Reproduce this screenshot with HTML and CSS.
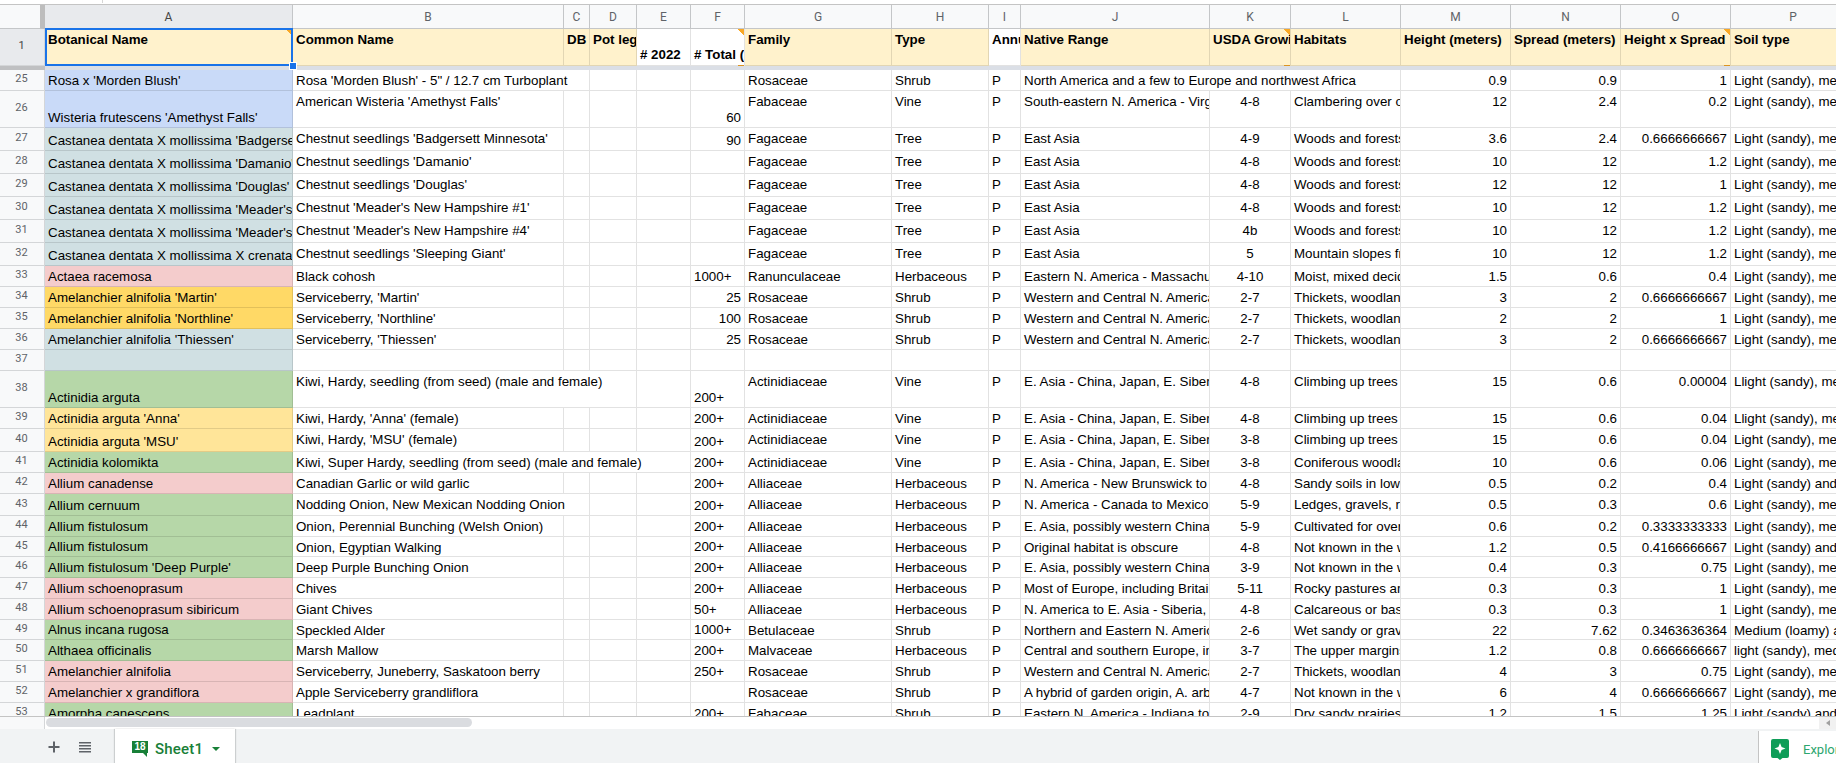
FILE: index.html
```html
<!DOCTYPE html>
<html lang="en">
<head>
<meta charset="utf-8">
<title>Sheet1</title>
<link rel="stylesheet" href="styles.css">
</head>
<body>
<div class="topstrip"><span class="tick"></span></div>
<div class="grid">
<table class="sheet">
<colgroup>
<col class="w-rh"><col class="w-a"><col class="w-b"><col class="w-c"><col class="w-d"><col class="w-e"><col class="w-f"><col class="w-g"><col class="w-h"><col class="w-i"><col class="w-j"><col class="w-k"><col class="w-l"><col class="w-m"><col class="w-m"><col class="w-m"><col class="w-p">
</colgroup>
<thead>
<tr class="letters"><th class="corner"></th><th class="sel">A</th><th>B</th><th>C</th><th>D</th><th>E</th><th>F</th><th>G</th><th>H</th><th>I</th><th>J</th><th>K</th><th>L</th><th>M</th><th>N</th><th>O</th><th>P</th></tr>
</thead>
<tbody>
<tr class="h37 head"><th class="sel">1</th><td class="note">Botanical Name</td><td>Common Name</td><td>DB</td><td>Pot legs</td><td class="plain b"># 2022</td><td class="plain b note"># Total (all)</td><td>Family</td><td>Type</td><td class="plain">Annual</td><td>Native Range</td><td class="note">USDA Growing Zone</td><td>Habitats</td><td>Height (meters)</td><td>Spread (meters)</td><td class="note">Height x Spread</td><td>Soil type</td></tr>
<tr class="freeze"><th></th><td colspan="16"></td></tr>
<tr class="h21"><th>25</th><td class="bl">Rosa x 'Morden Blush'</td><td colspan="2">Rosa 'Morden Blush' - 5" / 12.7 cm Turboplant</td><td></td><td></td><td class="b"></td><td>Rosaceae</td><td>Shrub</td><td>P</td><td colspan="3">North America and a few to Europe and northwest Africa</td><td class="n">0.9</td><td class="n">0.9</td><td class="n">1</td><td>Light (sandy), medium (loamy)</td></tr>
<tr class="h37"><th>26</th><td class="bl">Wisteria frutescens 'Amethyst Falls'</td><td>American Wisteria 'Amethyst Falls'</td><td></td><td></td><td></td><td class="b n">60</td><td>Fabaceae</td><td>Vine</td><td>P</td><td>South-eastern N. America - Virginia to Florida</td><td class="c">4-8</td><td>Clambering over other plants</td><td class="n">12</td><td class="n">2.4</td><td class="n">0.2</td><td>Light (sandy), medium (loamy)</td></tr>
<tr class="h23"><th>27</th><td class="te">Castanea dentata X mollissima 'Badgersett Minnesota'</td><td>Chestnut seedlings 'Badgersett Minnesota'</td><td></td><td></td><td></td><td class="b n">90</td><td>Fagaceae</td><td>Tree</td><td>P</td><td>East Asia</td><td class="c">4-9</td><td>Woods and forests</td><td class="n">3.6</td><td class="n">2.4</td><td class="n">0.6666666667</td><td>Light (sandy), medium (loamy)</td></tr>
<tr class="h23"><th>28</th><td class="te">Castanea dentata X mollissima 'Damanio'</td><td>Chestnut seedlings 'Damanio'</td><td></td><td></td><td></td><td></td><td>Fagaceae</td><td>Tree</td><td>P</td><td>East Asia</td><td class="c">4-8</td><td>Woods and forests</td><td class="n">10</td><td class="n">12</td><td class="n">1.2</td><td>Light (sandy), medium (loamy)</td></tr>
<tr class="h23"><th>29</th><td class="te">Castanea dentata X mollissima 'Douglas'</td><td>Chestnut seedlings 'Douglas'</td><td></td><td></td><td></td><td></td><td>Fagaceae</td><td>Tree</td><td>P</td><td>East Asia</td><td class="c">4-8</td><td>Woods and forests</td><td class="n">12</td><td class="n">12</td><td class="n">1</td><td>Light (sandy), medium (loamy)</td></tr>
<tr class="h23"><th>30</th><td class="te">Castanea dentata X mollissima 'Meader's New Hampshire #1'</td><td>Chestnut 'Meader's New Hampshire #1'</td><td></td><td></td><td></td><td></td><td>Fagaceae</td><td>Tree</td><td>P</td><td>East Asia</td><td class="c">4-8</td><td>Woods and forests</td><td class="n">10</td><td class="n">12</td><td class="n">1.2</td><td>Light (sandy), medium (loamy)</td></tr>
<tr class="h23"><th>31</th><td class="te">Castanea dentata X mollissima 'Meader's New Hampshire #4'</td><td>Chestnut 'Meader's New Hampshire #4'</td><td></td><td></td><td></td><td></td><td>Fagaceae</td><td>Tree</td><td>P</td><td>East Asia</td><td class="c">4b</td><td>Woods and forests</td><td class="n">10</td><td class="n">12</td><td class="n">1.2</td><td>Light (sandy), medium (loamy)</td></tr>
<tr class="h23"><th>32</th><td class="te">Castanea dentata X mollissima X crenata 'Sleeping Giant'</td><td>Chestnut seedlings 'Sleeping Giant'</td><td></td><td></td><td></td><td></td><td>Fagaceae</td><td>Tree</td><td>P</td><td>East Asia</td><td class="c">5</td><td>Mountain slopes from low elevations</td><td class="n">10</td><td class="n">12</td><td class="n">1.2</td><td>Light (sandy), medium (loamy)</td></tr>
<tr class="h21"><th>33</th><td class="rd">Actaea racemosa</td><td>Black cohosh</td><td></td><td></td><td></td><td class="b">1000+</td><td>Ranunculaceae</td><td>Herbaceous</td><td>P</td><td>Eastern N. America - Massachusetts to Georgia</td><td class="c">4-10</td><td>Moist, mixed deciduous woods</td><td class="n">1.5</td><td class="n">0.6</td><td class="n">0.4</td><td>Light (sandy), medium (loamy)</td></tr>
<tr class="h21"><th>34</th><td class="or">Amelanchier alnifolia 'Martin'</td><td>Serviceberry, 'Martin'</td><td></td><td></td><td></td><td class="b n">25</td><td>Rosaceae</td><td>Shrub</td><td>P</td><td>Western and Central N. America</td><td class="c">2-7</td><td>Thickets, woodland edges</td><td class="n">3</td><td class="n">2</td><td class="n">0.6666666667</td><td>Light (sandy), medium (loamy)</td></tr>
<tr class="h21"><th>35</th><td class="or">Amelanchier alnifolia 'Northline'</td><td>Serviceberry, 'Northline'</td><td></td><td></td><td></td><td class="b n">100</td><td>Rosaceae</td><td>Shrub</td><td>P</td><td>Western and Central N. America</td><td class="c">2-7</td><td>Thickets, woodland edges</td><td class="n">2</td><td class="n">2</td><td class="n">1</td><td>Light (sandy), medium (loamy)</td></tr>
<tr class="h21"><th>36</th><td class="te">Amelanchier alnifolia 'Thiessen'</td><td>Serviceberry, 'Thiessen'</td><td></td><td></td><td></td><td class="b n">25</td><td>Rosaceae</td><td>Shrub</td><td>P</td><td>Western and Central N. America</td><td class="c">2-7</td><td>Thickets, woodland edges</td><td class="n">3</td><td class="n">2</td><td class="n">0.6666666667</td><td>Light (sandy), medium (loamy)</td></tr>
<tr class="h21"><th>37</th><td class="te"></td><td></td><td></td><td></td><td></td><td></td><td></td><td></td><td></td><td></td><td></td><td></td><td></td><td></td><td></td><td></td></tr>
<tr class="h37"><th>38</th><td class="gr">Actinidia arguta</td><td colspan="3">Kiwi, Hardy, seedling (from seed) (male and female)</td><td></td><td class="b">200+</td><td>Actinidiaceae</td><td>Vine</td><td>P</td><td>E. Asia - China, Japan, E. Siberia</td><td class="c">4-8</td><td>Climbing up trees</td><td class="n">15</td><td class="n">0.6</td><td class="n">0.00004</td><td>Llight (sandy), medium (loamy)</td></tr>
<tr class="h21"><th>39</th><td class="ye">Actinidia arguta 'Anna'</td><td>Kiwi, Hardy, 'Anna' (female)</td><td></td><td></td><td></td><td class="b">200+</td><td>Actinidiaceae</td><td>Vine</td><td>P</td><td>E. Asia - China, Japan, E. Siberia</td><td class="c">4-8</td><td>Climbing up trees</td><td class="n">15</td><td class="n">0.6</td><td class="n">0.04</td><td>Llight (sandy), medium (loamy)</td></tr>
<tr class="h23"><th>40</th><td class="ye">Actinidia arguta 'MSU'</td><td>Kiwi, Hardy, 'MSU' (female)</td><td></td><td></td><td></td><td class="b">200+</td><td>Actinidiaceae</td><td>Vine</td><td>P</td><td>E. Asia - China, Japan, E. Siberia</td><td class="c">3-8</td><td>Climbing up trees</td><td class="n">15</td><td class="n">0.6</td><td class="n">0.04</td><td>Light (sandy), medium (loamy)</td></tr>
<tr class="h21"><th>41</th><td class="gr">Actinidia kolomikta</td><td colspan="4">Kiwi, Super Hardy, seedling (from seed) (male and female)</td><td class="b">200+</td><td>Actinidiaceae</td><td>Vine</td><td>P</td><td>E. Asia - China, Japan, E. Siberia</td><td class="c">3-8</td><td>Coniferous woodland</td><td class="n">10</td><td class="n">0.6</td><td class="n">0.06</td><td>Light (sandy), medium (loamy)</td></tr>
<tr class="h21"><th>42</th><td class="rd">Allium canadense</td><td>Canadian Garlic or wild garlic</td><td></td><td></td><td></td><td class="b">200+</td><td>Alliaceae</td><td>Herbaceous</td><td>P</td><td>N. America - New Brunswick to Florida</td><td class="c">4-8</td><td>Sandy soils in low woods</td><td class="n">0.5</td><td class="n">0.2</td><td class="n">0.4</td><td>Light (sandy) and medium (loamy)</td></tr>
<tr class="h22"><th>43</th><td class="gr">Allium cernuum</td><td colspan="2">Nodding Onion, New Mexican Nodding Onion</td><td></td><td></td><td class="b">200+</td><td>Alliaceae</td><td>Herbaceous</td><td>P</td><td>N. America - Canada to Mexico</td><td class="c">5-9</td><td>Ledges, gravels, rocky</td><td class="n">0.5</td><td class="n">0.3</td><td class="n">0.6</td><td>Light (sandy), medium (loamy)</td></tr>
<tr class="h21"><th>44</th><td class="gr">Allium fistulosum</td><td>Onion, Perennial Bunching (Welsh Onion)</td><td></td><td></td><td></td><td class="b">200+</td><td>Alliaceae</td><td>Herbaceous</td><td>P</td><td>E. Asia, possibly western China</td><td class="c">5-9</td><td>Cultivated for over 2000 years</td><td class="n">0.6</td><td class="n">0.2</td><td class="n">0.3333333333</td><td>Light (sandy), medium (loamy)</td></tr>
<tr class="h20"><th>45</th><td class="gr">Allium fistulosum</td><td>Onion, Egyptian Walking</td><td></td><td></td><td></td><td class="b">200+</td><td>Alliaceae</td><td>Herbaceous</td><td>P</td><td>Original habitat is obscure</td><td class="c">4-8</td><td>Not known in the wild</td><td class="n">1.2</td><td class="n">0.5</td><td class="n">0.4166666667</td><td>Light (sandy) and medium (loamy)</td></tr>
<tr class="h21"><th>46</th><td class="gr">Allium fistulosum 'Deep Purple'</td><td>Deep Purple Bunching Onion</td><td></td><td></td><td></td><td class="b">200+</td><td>Alliaceae</td><td>Herbaceous</td><td>P</td><td>E. Asia, possibly western China</td><td class="c">3-9</td><td>Not known in the wild</td><td class="n">0.4</td><td class="n">0.3</td><td class="n">0.75</td><td>Light (sandy), medium (loamy)</td></tr>
<tr class="h21"><th>47</th><td class="rd">Allium schoenoprasum</td><td>Chives</td><td></td><td></td><td></td><td class="b">200+</td><td>Alliaceae</td><td>Herbaceous</td><td>P</td><td>Most of Europe, including Britain</td><td class="c">5-11</td><td>Rocky pastures and meadows</td><td class="n">0.3</td><td class="n">0.3</td><td class="n">1</td><td>Light (sandy), medium (loamy)</td></tr>
<tr class="h21"><th>48</th><td class="rd">Allium schoenoprasum sibiricum</td><td>Giant Chives</td><td></td><td></td><td></td><td class="b">50+</td><td>Alliaceae</td><td>Herbaceous</td><td>P</td><td>N. America to E. Asia - Siberia, Japan</td><td class="c">4-8</td><td>Calcareous or basic rocks</td><td class="n">0.3</td><td class="n">0.3</td><td class="n">1</td><td>Light (sandy), medium (loamy)</td></tr>
<tr class="h20"><th>49</th><td class="gr">Alnus incana rugosa</td><td>Speckled Alder</td><td></td><td></td><td></td><td class="b">1000+</td><td>Betulaceae</td><td>Shrub</td><td>P</td><td>Northern and Eastern N. America</td><td class="c">2-6</td><td>Wet sandy or gravelly soils</td><td class="n">22</td><td class="n">7.62</td><td class="n">0.3463636364</td><td>Medium (loamy) and heavy</td></tr>
<tr class="h21"><th>50</th><td class="gr">Althaea officinalis</td><td>Marsh Mallow</td><td></td><td></td><td></td><td class="b">200+</td><td>Malvaceae</td><td>Herbaceous</td><td>P</td><td>Central and southern Europe, including Britain</td><td class="c">3-7</td><td>The upper margins of salt marshes</td><td class="n">1.2</td><td class="n">0.8</td><td class="n">0.6666666667</td><td>light (sandy), medium (loamy)</td></tr>
<tr class="h21"><th>51</th><td class="rd">Amelanchier alnifolia</td><td>Serviceberry, Juneberry, Saskatoon berry</td><td></td><td></td><td></td><td class="b">250+</td><td>Rosaceae</td><td>Shrub</td><td>P</td><td>Western and Central N. America</td><td class="c">2-7</td><td>Thickets, woodland edges</td><td class="n">4</td><td class="n">3</td><td class="n">0.75</td><td>Light (sandy), medium (loamy)</td></tr>
<tr class="h21"><th>52</th><td class="rd">Amelanchier x grandiflora</td><td>Apple Serviceberry grandliflora</td><td></td><td></td><td></td><td></td><td>Rosaceae</td><td>Shrub</td><td>P</td><td>A hybrid of garden origin, A. arborea</td><td class="c">4-7</td><td>Not known in the wild</td><td class="n">6</td><td class="n">4</td><td class="n">0.6666666667</td><td>Light (sandy), medium (loamy)</td></tr>
<tr class="h21"><th>53</th><td class="gr">Amorpha canescens</td><td>Leadplant</td><td></td><td></td><td></td><td class="b">200+</td><td>Fabaceae</td><td>Shrub</td><td>P</td><td>Eastern N. America - Indiana to Texas</td><td class="c">2-9</td><td>Dry sandy prairies</td><td class="n">1.2</td><td class="n">1.5</td><td class="n">1.25</td><td>Light (sandy) and medium (loamy)</td></tr>
</tbody>
</table>
<div class="selection"><span class="handle"></span></div>
</div>
<div class="hscroll">
<div class="hscroll-gutter"></div>
<div class="hscroll-track"><div class="thumb"></div></div>
<div class="arrow"><span class="arrow-left"></span></div>
</div>
<div class="tabs">
<button class="tool" aria-label="Add sheet">
<svg width="14" height="14" viewBox="0 0 14 14"><path d="M6 1.500h2v4.500h4.500v2H8v4.500H6V8H1.500V6H6z" fill="#5f6368"/></svg>
</button>
<button class="tool" aria-label="All sheets">
<svg width="14" height="14" viewBox="0 0 14 14"><path d="M1 2h12v1.600H1zM1 5h12v1.600H1zM1 8h12v1.600H1zM1 11h12v1.600H1z" fill="#5f6368"/></svg>
</button>
<div class="tab">
<span class="badge">18</span>
<span class="tab-name">Sheet1</span>
<span class="caret"></span>
</div>
<div class="explore">
<svg class="explore-icon" width="18" height="21" viewBox="0 0 18 21"><path d="M2 0h14a2 2 0 0 1 2 2v15a2 2 0 0 1-2 2h-4.500L9 21l-2.500-2H2a2 2 0 0 1-2-2V2a2 2 0 0 1 2-2z" fill="#0f9d58"/><path d="M9 4l1.600 3.900L14.500 9.500l-3.900 1.600L9 15l-1.600-3.900L3.500 9.500l3.900-1.600z" fill="#fff"/></svg>
<span class="explore-label">Explore</span>
</div>
</div>
</body>
</html>
```
FILE: styles.css
```css
* { box-sizing: border-box; }
html, body { margin: 0; height: 100%; }
body {
  display: flex;
  flex-direction: column;
  width: 1836px;
  height: 763px;
  overflow: hidden;
  background: #fff;
  font-family: "Liberation Sans", Arial, sans-serif;
  font-size: 13.33px;
  color: #000;
}

.topstrip {
  flex: 0 0 5px;
  padding-left: 102px;
  border-bottom: 1px solid #c4c4c4;
}
.tick { display: block; width: 1px; height: 3px; background: #d6d6d6; }

.grid {
  flex: 0 0 712px;
  position: relative;
  overflow: hidden;
  border-bottom: 1px solid #c4c4c4;
}

.sheet {
  table-layout: fixed;
  width: 1846px;
  border-collapse: separate;
  border-spacing: 0;
  line-height: 16px;
}
.w-rh { width: 45px; }
.w-a { width: 248px; }
.w-b { width: 271px; }
.w-c { width: 26px; }
.w-d { width: 47px; }
.w-e { width: 54px; }
.w-f { width: 54px; }
.w-g { width: 147px; }
.w-h { width: 97px; }
.w-i { width: 32px; }
.w-j { width: 189px; }
.w-k { width: 81px; }
.w-l { width: 110px; }
.w-m { width: 110px; }
.w-p { width: 125px; }

.sheet td {
  padding: 3px 3px 0;
  vertical-align: top;
  white-space: nowrap;
  overflow: hidden;
  border-right: 1px solid rgba(0, 0, 0, .115);
  border-bottom: 1px solid rgba(0, 0, 0, .115);
}
.sheet th {
  padding: 0 1px 2px 0;
  font-family: Roboto, "Liberation Sans", sans-serif;
  font-size: 11px;
  font-weight: 400;
  color: #5f6368;
  text-align: center;
  vertical-align: middle;
  background: #f8f9fa;
  border-right: 1px solid #d4d6d8;
  border-bottom: 1px solid #d4d6d8;
  overflow: hidden;
}

.letters { height: 24px; }
.letters th {
  font-size: 12px;
  padding: 1px 0 0;
  border-right-color: #c4c6c8;
  border-bottom-color: #c4c6c8;
}
.sheet th.corner { border-right: 5px solid #bdbdbd; }
.sheet th.sel { background: #e8eaed; color: #444; }

.h20 { height: 20px; }
.h21 { height: 21px; }
.h22 { height: 22px; }
.h23 { height: 23px; }
.h37 { height: 37px; }

.head td { background-color: #fff2cc; font-weight: 700; }
.head td.plain { background-color: #fff; }
.head .note {
  background-image: linear-gradient(225deg, #f9a825 4.3px, transparent 4.3px);
}

.freeze { height: 4px; line-height: 0; }
.sheet .freeze td { padding: 0; background: #dbdfe6; border: 0; }
.sheet .freeze th { padding: 0; background: #bfc0c2; border: 0; font-size: 0; }

.sheet td.b, .sheet td.bl, .sheet td.te, .sheet td.rd, .sheet td.or, .sheet td.ye, .sheet td.gr {
  vertical-align: bottom;
  padding-top: 0;
  padding-bottom: 1px;
}
.sheet .head td.b { padding-bottom: 2px; }
.bl { background: #c9daf8; }
.te { background: #d0e0e3; }
.rd { background: #f4cccc; }
.or { background: #ffd966; }
.ye { background: #ffe599; }
.gr { background: #b6d7a8; }
.n { text-align: right; }
.c { text-align: center; }

.selection {
  position: absolute;
  left: 45px;
  top: 23px;
  width: 248px;
  height: 38px;
  border: 2px solid #1a73e8;
}
.handle {
  position: absolute;
  right: -6px;
  bottom: -6px;
  width: 8px;
  height: 8px;
  background: #1a73e8;
  border: 1px solid #fff;
}

.hscroll {
  flex: 0 0 12px;
  display: flex;
  background: #fff;
}
.hscroll-gutter { flex: 0 0 45px; background: #f8f9fa; border-right: 1px solid #d4d6d8; }
.hscroll-track { flex: 1; padding: 1px 0 1px 1px; }
.thumb { width: 426px; height: 9px; background: #dadce0; border-radius: 5px; }
.arrow {
  flex: 0 0 17px;
  display: flex;
  align-items: center;
  justify-content: center;
  background: #f1f1f1;
}
.arrow-left {
  width: 0;
  height: 0;
  border-top: 3px solid transparent;
  border-bottom: 3px solid transparent;
  border-right: 4px solid #a0a0a0;
}

.tabs {
  flex: 1;
  display: flex;
  align-items: stretch;
  background: #f1f3f4;
  padding-left: 43px;
}
.tool {
  flex: 0 0 auto;
  width: 32px;
  padding: 0;
  border: 0;
  background: none;
  display: flex;
  align-items: center;
  justify-content: center;
}
.tool + .tool { margin-left: -1px; }
.tool svg { margin-left: -11px; margin-top: 2px; }
.tab {
  margin-left: 9px;
  width: 120px;
  background: #fff;
  display: flex;
  align-items: center;
  padding-left: 17px;
  box-shadow: 1px 0 1px rgba(60, 64, 67, .2), -1px 0 1px rgba(60, 64, 67, .2);
}
.badge {
  position: relative;
  flex: 0 0 16px;
  height: 12px;
  margin-top: 2px;
  background: #188038;
  color: #fff;
  font: 700 10px/12px "Liberation Sans", sans-serif;
  text-align: center;
}
.badge::after {
  content: "";
  position: absolute;
  right: 1px;
  top: 12px;
  border-top: 4px solid #188038;
  border-left: 4px solid transparent;
}
.tab-name {
  flex: 0 0 47px;
  margin-left: 7px;
  margin-top: 6px;
  font: 500 15px/20px Roboto, sans-serif;
  letter-spacing: .2px;
  color: #188038;
}
.caret {
  flex: 0 0 auto;
  margin-left: 9px;
  margin-top: 6px;
  width: 0;
  height: 0;
  border-left: 4px solid transparent;
  border-right: 4px solid transparent;
  border-top: 4px solid #188038;
}
.explore {
  margin-left: auto;
  margin-top: 2px;
  flex: 0 0 78px;
  background: #fff;
  border-left: 1px solid #c4c4c4;
  display: flex;
  align-items: center;
  padding-left: 12px;
  overflow: hidden;
  white-space: nowrap;
}
.explore-icon { flex: 0 0 18px; margin-top: 5px; }
.explore-label {
  flex: 0 0 auto;
  margin-left: 14px;
  margin-top: 6px;
  font: 400 13px/20px Roboto, sans-serif;
  color: #2da66f;
}
```
